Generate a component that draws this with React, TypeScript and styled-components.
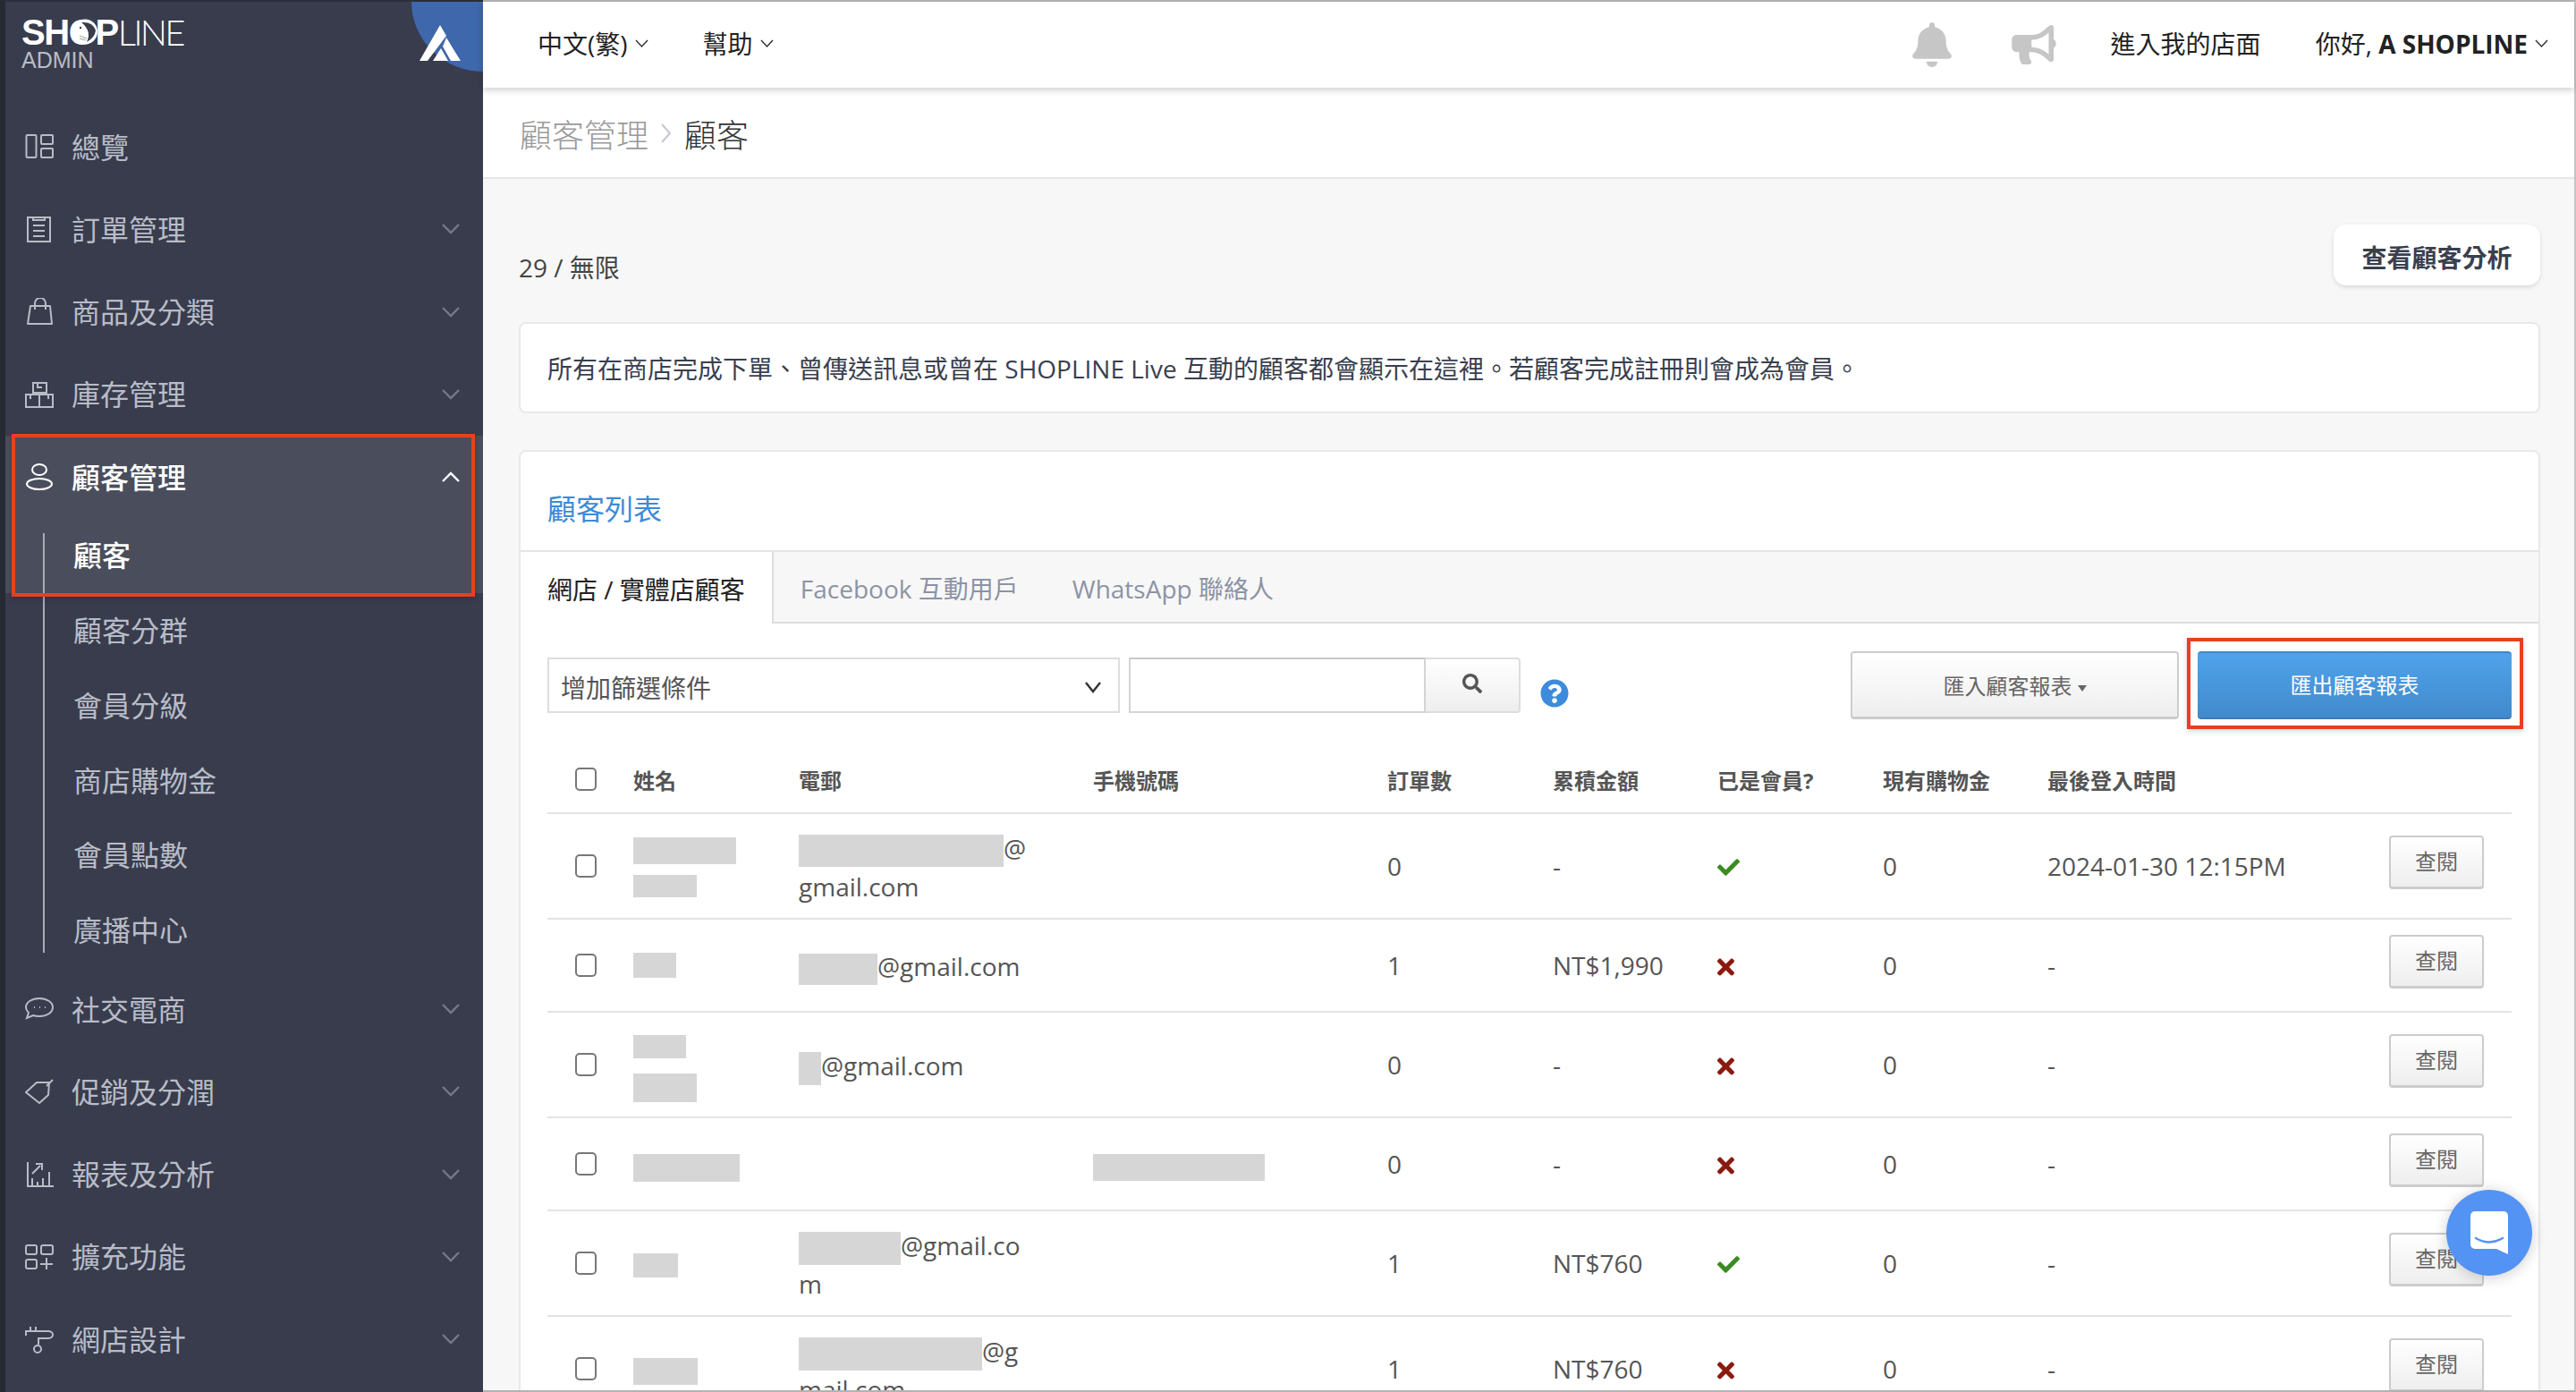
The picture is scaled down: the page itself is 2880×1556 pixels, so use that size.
import React from "react";
import styled, { createGlobalStyle } from "styled-components";
import { FaBell, FaBullhorn, FaCheck, FaTimes, FaQuestionCircle, FaSearch } from "react-icons/fa";

const GlobalStyle = createGlobalStyle`
  html, body {
    margin: 0;
    padding: 0;
    height: 100%;
    overflow: hidden;
  }
  body {
    font-family: "Open Sans", "Noto Sans CJK TC", sans-serif;
    font-size: 28px;
    color: #555;
  }
  * {
    box-sizing: border-box;
  }
`;

const Frame = styled.div`
  position: relative;
  display: flex;
  width: 2880px;
  height: 1556px;
  overflow: hidden;
`;

// red marks drawn on top of the screenshot
const Annotation = styled.div<{ $x: number; $y: number; $w: number; $h: number }>`
  position: absolute;
  left: ${(p) => p.$x}px;
  top: ${(p) => p.$y}px;
  width: ${(p) => p.$w}px;
  height: ${(p) => p.$h}px;
  border: 4px solid #e8401f;
  box-shadow: 0 2px 6px rgba(0, 0, 0, 0.18);
  pointer-events: none;
`;

/* sidebar */
const Sidebar = styled.aside`
  flex: 0 0 540px;
  height: 100%;
  background: #383c4c;
  border-left: 6px solid #262a35;
  border-top: 2px solid #2a2e3c;
  overflow: hidden;
`;

const Brand = styled.div`
  position: relative;
  height: 116px;
  padding: 19px 0 0 18px;
`;

const BrandName = styled.div`
  position: relative;
  display: flex;
  width: 190px;
  height: 30px;
  align-items: center;
  font-family: "Liberation Sans", sans-serif;
  font-size: 40px;
  line-height: 30px;
  color: #fff;
`;

const BrandBold = styled.span`
  font-weight: 700;
  letter-spacing: -1.4px;
`;

const BrandLight = styled.span`
  font-family: "Lato", sans-serif;
  font-weight: 300;
  letter-spacing: -2.8px;
`;

const BrandFish = styled.svg`
  position: absolute;
  left: 56px;
  top: 0;
  width: 30px;
  height: 29px;
`;

const BrandSub = styled.div`
  margin-top: 6px;
  font-family: "Liberation Sans", sans-serif;
  font-size: 25px;
  line-height: 20px;
  color: #b9bcc6;
`;

const CornerBadge = styled.div`
  position: absolute;
  right: 0;
  top: 0;
  width: 80px;
  height: 78px;
  background: #3f67ab;
  border-bottom-left-radius: 80px 78px;
`;

const CornerLogo = styled.svg`
  position: absolute;
  left: 9px;
  top: 26px;
  width: 46px;
  height: 40px;
`;

const NavRow = styled.div<{ $active?: boolean }>`
  display: flex;
  align-items: center;
  height: 92.25px;
  padding: 0 26px 0 22px;
  font-size: 32px;
  color: ${(p) => (p.$active ? "#fff" : "#b8bcc8")};
  background: ${(p) => (p.$active ? "#4a4e5c" : "transparent")};
  font-weight: ${(p) => (p.$active ? 500 : 400)};
`;

const NavIcon = styled.svg`
  flex: 0 0 32px;
  width: 32px;
  height: 32px;
  margin-right: 20px;
  fill: none;
  stroke: currentColor;
  stroke-width: 2;
`;

const NavLabel = styled.span`
  flex: 1;
  padding-bottom: 3px;
`;

const NavChevron = styled.svg<{ $active?: boolean }>`
  width: 20px;
  height: 12px;
  fill: none;
  stroke: ${(p) => (p.$active ? "#fff" : "#747888")};
  stroke-width: 2.4;
`;

const SubList = styled.div`
  position: relative;
  &::before {
    content: "";
    position: absolute;
    left: 42px;
    top: 17px;
    bottom: 17px;
    width: 2px;
    background: #a8abb5;
  }
`;

const SubRow = styled.div<{ $active?: boolean }>`
  height: 83.8px;
  line-height: 83.8px;
  padding-left: 76px;
  font-size: 32px;
  color: ${(p) => (p.$active ? "#fff" : "#b8bcc8")};
  background: ${(p) => (p.$active ? "#4a4e5c" : "transparent")};
  font-weight: ${(p) => (p.$active ? 500 : 400)};
`;

/* header */
const Main = styled.main`
  flex: 1;
  min-width: 0;
  display: flex;
  flex-direction: column;
  height: 100%;
  border-top: 2px solid #b3b3b3;
  border-right: 2px solid #c4c4c4;
  border-bottom: 2px solid #b3b3b3;
  background: #f7f7f7;
`;

const TopBar = styled.header`
  position: relative;
  z-index: 2;
  flex: 0 0 96px;
  display: flex;
  align-items: center;
  padding: 0 28px 3px 61px;
  background: #fff;
  box-shadow: 0 3px 7px rgba(0, 0, 0, 0.18);
  color: #222;
`;

const TopLink = styled.span<{ $gap?: number }>`
  display: inline-flex;
  align-items: center;
  margin-right: ${(p) => p.$gap ?? 0}px;
  line-height: 40px;
  white-space: nowrap;
`;

const Caret = styled.svg`
  width: 17px;
  height: 10px;
  margin-left: 7px;
  fill: none;
  stroke: #333;
  stroke-width: 1.5;
`;

const TopSpacer = styled.div`
  flex: 1;
`;

const BellIcon = styled(FaBell)`
  width: 46px;
  height: 50px;
  margin: 3px 65px 0 0;
  color: #c6c6c6;
`;

const HornIcon = styled(FaBullhorn)`
  width: 52px;
  height: 44px;
  margin: 3px 60px 0 0;
  color: #c6c6c6;
`;

const Crumbs = styled.div`
  flex: 0 0 102px;
  display: flex;
  align-items: center;
  padding: 2px 0 0 41px;
  background: #fff;
  border-bottom: 2px solid #e5e5e5;
  font-size: 36px;
  font-weight: 300;
`;

const CrumbParent = styled.span`
  color: #999;
`;

const CrumbCurrent = styled.span`
  color: #333;
`;

const CrumbArrow = styled.svg`
  width: 14px;
  height: 28px;
  margin: 0 13px 0 13px;
  fill: none;
  stroke: #c3c7d3;
  stroke-width: 2;
`;

/* content */
const Content = styled.div`
  flex: 1;
  min-height: 0;
  overflow: hidden;
  padding: 51px 38px 0 40px;
`;

const SummaryRow = styled.div`
  display: flex;
  justify-content: space-between;
  align-items: flex-end;
`;

const Count = styled.div`
  line-height: 40px;
  color: #444;
`;

const AnalysisButton = styled.button`
  width: 231px;
  height: 68px;
  padding: 3px 0 0;
  border: 0;
  border-radius: 14px;
  background: #fff;
  box-shadow: 0 2px 5px rgba(0, 0, 0, 0.12);
  font: inherit;
  font-weight: 600;
  color: #3a3f4f;
`;

const InfoCard = styled.div`
  display: flex;
  align-items: center;
  height: 102px;
  margin-top: 41px;
  padding-left: 30px;
  background: #fff;
  border: 2px solid #e8e8e8;
  border-radius: 8px;
  color: #3a3f4f;
`;

const Panel = styled.section`
  margin-top: 41px;
  background: #fff;
  border: 2px solid #e8e8e8;
  border-radius: 8px 8px 0 0;
`;

const PanelTitle = styled.h2`
  margin: 0;
  height: 110px;
  padding: 42px 0 0 30px;
  font-size: 32px;
  font-weight: 400;
  line-height: 44px;
  color: #3b8bd9;
`;

const TabBar = styled.div`
  display: flex;
  height: 82px;
  background: #f7f7f7;
  border-top: 2px solid #e5e5e5;
  border-bottom: 2px solid #ddd;
`;

const Tab = styled.div<{ $active?: boolean }>`
  display: flex;
  align-items: center;
  height: ${(p) => (p.$active ? "80px" : "auto")};
  padding: 2px 30px 0;
  background: ${(p) => (p.$active ? "#fff" : "transparent")};
  border-right: ${(p) => (p.$active ? "2px solid #ddd" : "0")};
  color: ${(p) => (p.$active ? "#222" : "#8d93a5")};
`;

const Toolbar = styled.div`
  display: flex;
  align-items: flex-start;
  margin: 31px 30px 0;
  height: 76px;
`;

const SelectBox = styled.div`
  display: flex;
  align-items: center;
  justify-content: space-between;
  width: 640px;
  height: 62px;
  margin-top: 7px;
  padding: 4px 18px 0 13px;
  border: 2px solid #ddd;
  color: #555;
`;

const SelectCaret = styled.svg`
  width: 20px;
  height: 14px;
  fill: none;
  stroke: #333;
  stroke-width: 2.4;
`;

const SearchGroup = styled.div`
  display: flex;
  width: 438px;
  height: 62px;
  margin: 7px 0 0 10px;
`;

const SearchInput = styled.input`
  flex: 1;
  min-width: 0;
  border: 2px solid #d4d4d4;
  border-top-color: #c8c8c8;
  background: #fff;
`;

const SearchButton = styled.button`
  flex: 0 0 106px;
  display: flex;
  align-items: center;
  justify-content: center;
  padding: 0 0 4px;
  border: 2px solid #ddd;
  border-left: 0;
  border-radius: 0 4px 4px 0;
  background: linear-gradient(#fff, #eee);
  color: #555;
`;

const SearchGlyph = styled(FaSearch)`
  width: 22px;
  height: 24px;
`;

const HelpIcon = styled(FaQuestionCircle)`
  width: 32px;
  height: 32px;
  margin: 31px 0 0 22px;
  color: #3d8bdc;
`;

const ToolSpacer = styled.div`
  flex: 1;
`;

const ImportButton = styled.button`
  width: 367px;
  height: 76px;
  margin-right: 21px;
  border: 2px solid #ccc;
  border-bottom-width: 3px;
  border-radius: 4px;
  background: linear-gradient(#fff, #eee);
  font: inherit;
  font-size: 24px;
  color: #666;
`;

const CaretDown = styled.span`
  display: inline-block;
  margin-left: 6px;
  vertical-align: middle;
  border-left: 5px solid transparent;
  border-right: 5px solid transparent;
  border-top: 7px solid #666;
`;

const ExportButton = styled.button`
  width: 351px;
  height: 76px;
  padding: 0 0 3px;
  border: 0;
  border-top: 2px solid #3f87c9;
  border-bottom: 2px solid #3b7db9;
  border-radius: 4px;
  background: linear-gradient(#4fa3ec, #418acb);
  font: inherit;
  font-size: 24px;
  color: #fff;
`;

/* table */
const Table = styled.div`
  margin: 32px 30px 0;
`;

const Row = styled.div<{ $height: number }>`
  display: grid;
  grid-template-columns: 96px 185px 329px 329px 185px 184px 185px 184px 330px 1fr;
  align-items: center;
  height: ${(p) => p.$height}px;
  border-bottom: 2px solid #e3e3e3;
`;

const HeadRow = styled(Row)`
  padding-bottom: 2px;
`;

const HeadCell = styled.div`
  font-size: 24px;
  font-weight: 700;
  color: #555;
`;

const CheckCell = styled.div`
  display: flex;
  padding-left: 31px;
`;

const Check = styled.input`
  appearance: none;
  width: 24px;
  height: 26px;
  margin: 0;
  border: 2px solid #777;
  border-radius: 5px;
  background: #fff;
`;

const NameStack = styled.div<{ $gap: number; $shift: number }>`
  display: flex;
  flex-direction: column;
  align-items: flex-start;
  gap: ${(p) => p.$gap}px;
  padding-top: ${(p) => p.$shift}px;
`;

const Redacted = styled.span<{ $w: number; $h: number }>`
  display: inline-block;
  width: ${(p) => p.$w}px;
  height: ${(p) => p.$h}px;
  background: #d6d6d6;
  vertical-align: middle;
`;

const EmailCell = styled.div`
  width: 262px;
  padding-top: 3px;
  line-height: 43px;
  word-break: break-all;
`;

const TextCell = styled.div`
  line-height: 40px;
  white-space: nowrap;
`;

const MemberCell = styled.div<{ $member: boolean }>`
  padding-top: ${(p) => (p.$member ? 2 : 4)}px;
`;

const YesIcon = styled(FaCheck)`
  display: block;
  width: 25px;
  height: 25px;
  color: #3c8a21;
`;

const NoIcon = styled(FaTimes)`
  display: block;
  width: 19px;
  height: 28px;
  color: #8a1a0f;
`;

const ActionCell = styled.div`
  display: flex;
  justify-content: flex-end;
  padding-right: 31px;
`;

const ViewButton = styled.button`
  width: 106px;
  height: 60px;
  margin-bottom: 8px;
  padding: 0 0 5px;
  border: 2px solid #ccc;
  border-bottom-width: 3px;
  border-radius: 4px;
  background: linear-gradient(#fff, #eee);
  font: inherit;
  font-size: 24px;
  color: #666;
`;

/* chat launcher */
const ChatBubble = styled.div`
  position: absolute;
  left: 2735px;
  top: 1330px;
  display: flex;
  align-items: center;
  justify-content: center;
  width: 96px;
  height: 96px;
  border-radius: 50%;
  background: #5393f3;
  box-shadow: 0 2px 16px rgba(0, 0, 0, 0.2);
`;

const ChatGlyph = styled.svg`
  width: 42px;
  height: 48px;
`;

const navIcons: Record<string, React.ReactNode> = {
  overview: (
    <>
      <rect x="1.5" y="3" width="11" height="25" rx="1" />
      <rect x="18" y="3" width="13" height="10" rx="1" />
      <rect x="18" y="18" width="13" height="10" rx="1" />
    </>
  ),
  orders: (
    <>
      <path d="M3 3h25v27H3z" />
      <path d="M9 3v3h13V3M9 12h13M9 18h13M9 24h13" />
    </>
  ),
  bag: (
    <>
      <path d="M6 9h22l2 20H3z" strokeLinejoin="round" />
      <path d="M11 13V6a6 6 0 0 1 12 0v7" />
    </>
  ),
  stock: (
    <>
      <path d="M9 3h15v11H9zM1 16h15v14H1zM16 16h15v14H16z" />
      <path d="M14 3v5h5M6 16v5M26 16v5" />
    </>
  ),
  person: (
    <>
      <ellipse cx="16" cy="8" rx="8" ry="6" />
      <ellipse cx="16" cy="24" rx="14" ry="6" />
    </>
  ),
  chat: (
    <>
      <path d="M16 4c8 0 15 4 15 10s-7 10-15 10c-3 0-5-.3-7-1l-7 3 2-6c-2-2-3-4-3-6C1 8 8 4 16 4z" />
      <path d="M10 14h1M16 14h1M22 14h1" />
    </>
  ),
  tag: (
    <>
      <path d="M1 17 13 6h14l-1 14-10 9z" strokeLinejoin="round" />
      <path d="M24 10l7-7" />
    </>
  ),
  report: (
    <>
      <path d="M3 2v27h29" />
      <path d="M8 29v-9M14 29v-5M20 29v-9M27 29V13M8 15l9-9M12 4h7v7" />
    </>
  ),
  apps: (
    <>
      <rect x="1" y="3" width="12" height="10" rx="2" />
      <rect x="18" y="3" width="13" height="10" rx="2" />
      <rect x="1" y="19" width="12" height="10" rx="2" />
      <path d="M17 24h14M24 17v13" />
    </>
  ),
  paint: (
    <>
      <path d="M1 12V7h25c3 0 5 2 5 4s-2 4-5 4H15v7" />
      <path d="M6 7V2M12 7V2" />
      <circle cx="14" cy="27" r="4" />
    </>
  ),
};

const Icon = ({ name }: { name: string }) => <NavIcon viewBox="0 0 32 32">{navIcons[name]}</NavIcon>;

const Chevron = ({ up }: { up?: boolean }) => (
  <NavChevron viewBox="0 0 20 12" $active={up}>
    <path d={up ? "M1 11 10 2l9 9" : "M1 1l9 9 9-9"} />
  </NavChevron>
);

const TopCaret = () => (
  <Caret viewBox="0 0 17 10">
    <path d="M2 1l6.5 7L15 1" />
  </Caret>
);

const topMenu = [
  { icon: "overview", label: "總覽" },
  { icon: "orders", label: "訂單管理", more: true },
  { icon: "bag", label: "商品及分類", more: true },
  { icon: "stock", label: "庫存管理", more: true },
];

const bottomMenu = [
  { icon: "chat", label: "社交電商" },
  { icon: "tag", label: "促銷及分潤" },
  { icon: "report", label: "報表及分析" },
  { icon: "apps", label: "擴充功能" },
  { icon: "paint", label: "網店設計" },
];

const subMenu = ["顧客", "顧客分群", "會員分級", "商店購物金", "會員點數", "廣播中心"];

const heads = ["姓名", "電郵", "手機號碼", "訂單數", "累積金額", "已是會員?", "現有購物金", "最後登入時間"];

interface Customer {
  height: number;
  names: [number, number][];
  gap?: number;
  shift?: number;
  mail?: [number, number];
  phone?: [number, number];
  orders: number;
  total: string;
  member: boolean;
  last: string;
}

const customers: Customer[] = [
  { height: 118, names: [[115, 30], [71, 25]], gap: 12, shift: 2, mail: [229, 36], orders: 0, total: "-", member: true, last: "2024-01-30 12:15PM" },
  { height: 104, names: [[48, 28]], mail: [88, 35], orders: 1, total: "NT$1,990", member: false, last: "-" },
  { height: 118, names: [[59, 26], [71, 32]], gap: 17, shift: 8, mail: [25, 37], orders: 0, total: "-", member: false, last: "-" },
  { height: 104, names: [[119, 31]], shift: 8, phone: [192, 30], orders: 0, total: "-", member: false, last: "-" },
  { height: 118, names: [[50, 27]], shift: 4, mail: [114, 37], orders: 1, total: "NT$760", member: true, last: "-" },
  { height: 118, names: [[72, 30]], shift: 6, mail: [205, 37], orders: 1, total: "NT$760", member: false, last: "-" },
];

export default function App() {
  return (
    <Frame>
      <GlobalStyle />
      <Sidebar>
        <Brand>
          <BrandName>
            <BrandBold>SHOP</BrandBold>
            <BrandLight>LINE</BrandLight>
            <BrandFish viewBox="0 0 30 29">
              <circle cx="15" cy="14.5" r="14" fill="#fff" />
              <path d="M11 4 Q24 3 27 13 Q26 21 17 26 Q23 14 11 4z" fill="#383c4c" />
              <circle cx="10" cy="10" r="1.2" fill="#383c4c" />
              <path d="M9 19l8 3M9 22l7 2" fill="none" stroke="#9a9da8" strokeWidth="1" />
            </BrandFish>
          </BrandName>
          <BrandSub>ADMIN</BrandSub>
          <CornerBadge>
            <CornerLogo viewBox="0 0 46 40">
              <path d="M23 0 30 12 9 40H0z" fill="#fff" />
              <path d="M30 14 46 40H35L26 24z M24 26l8 14H15z" fill="#fff" />
            </CornerLogo>
          </CornerBadge>
        </Brand>

        {topMenu.map((item) => (
          <NavRow key={item.label}>
            <Icon name={item.icon} />
            <NavLabel>{item.label}</NavLabel>
            {item.more && <Chevron />}
          </NavRow>
        ))}

        <NavRow $active>
          <Icon name="person" />
          <NavLabel>顧客管理</NavLabel>
          <Chevron up />
        </NavRow>
        <SubList>
          {subMenu.map((label, i) => (
            <SubRow key={label} $active={i === 0}>
              {label}
            </SubRow>
          ))}
        </SubList>

        {bottomMenu.map((item) => (
          <NavRow key={item.label}>
            <Icon name={item.icon} />
            <NavLabel>{item.label}</NavLabel>
            <Chevron />
          </NavRow>
        ))}
      </Sidebar>

      <Main>
        <TopBar>
          <TopLink $gap={60}>
            中文(繁)
            <TopCaret />
          </TopLink>
          <TopLink>
            幫助
            <TopCaret />
          </TopLink>
          <TopSpacer />
          <BellIcon />
          <HornIcon />
          <TopLink $gap={61}>進入我的店面</TopLink>
          <TopLink>
            你好,&nbsp;<b>A SHOPLINE</b>
            <TopCaret />
          </TopLink>
        </TopBar>

        <Crumbs>
          <CrumbParent>顧客管理</CrumbParent>
          <CrumbArrow viewBox="0 0 14 28">
            <path d="M2 4l9 10-9 10" />
          </CrumbArrow>
          <CrumbCurrent>顧客</CrumbCurrent>
        </Crumbs>

        <Content>
          <SummaryRow>
            <Count>29 / 無限</Count>
            <AnalysisButton>查看顧客分析</AnalysisButton>
          </SummaryRow>

          <InfoCard>所有在商店完成下單、曾傳送訊息或曾在 SHOPLINE Live 互動的顧客都會顯示在這裡。若顧客完成註冊則會成為會員。</InfoCard>

          <Panel>
            <PanelTitle>顧客列表</PanelTitle>
            <TabBar>
              <Tab $active>網店 / 實體店顧客</Tab>
              <Tab>Facebook 互動用戶</Tab>
              <Tab>WhatsApp 聯絡人</Tab>
            </TabBar>

            <Toolbar>
              <SelectBox>
                增加篩選條件
                <SelectCaret viewBox="0 0 20 14">
                  <path d="M2 2l8 10 8-10" />
                </SelectCaret>
              </SelectBox>
              <SearchGroup>
                <SearchInput />
                <SearchButton>
                  <SearchGlyph />
                </SearchButton>
              </SearchGroup>
              <HelpIcon />
              <ToolSpacer />
              <ImportButton>
                匯入顧客報表
                <CaretDown />
              </ImportButton>
              <ExportButton>匯出顧客報表</ExportButton>
            </Toolbar>

            <Table>
              <HeadRow $height={74}>
                <CheckCell>
                  <Check type="checkbox" />
                </CheckCell>
                {heads.map((h) => (
                  <HeadCell key={h}>{h}</HeadCell>
                ))}
              </HeadRow>
              {customers.map((c, i) => (
                <Row key={i} $height={c.height}>
                  <CheckCell>
                    <Check type="checkbox" />
                  </CheckCell>
                  <NameStack $gap={c.gap ?? 0} $shift={c.shift ?? 0}>
                    {c.names.map(([w, h], n) => (
                      <Redacted key={n} $w={w} $h={h} />
                    ))}
                  </NameStack>
                  <EmailCell>
                    {c.mail && (
                      <>
                        <Redacted $w={c.mail[0]} $h={c.mail[1]} />
                        @gmail.com
                      </>
                    )}
                  </EmailCell>
                  <div>{c.phone && <Redacted $w={c.phone[0]} $h={c.phone[1]} />}</div>
                  <TextCell>{c.orders}</TextCell>
                  <TextCell>{c.total}</TextCell>
                  <MemberCell $member={c.member}>{c.member ? <YesIcon /> : <NoIcon />}</MemberCell>
                  <TextCell>0</TextCell>
                  <TextCell>{c.last}</TextCell>
                  <ActionCell>
                    <ViewButton>查閱</ViewButton>
                  </ActionCell>
                </Row>
              ))}
            </Table>
          </Panel>
        </Content>
      </Main>

      <ChatBubble>
        <ChatGlyph viewBox="0 0 42 48">
          <path d="M5 0h32a5 5 0 0 1 5 5v43l-13-6H5a5 5 0 0 1-5-5V5a5 5 0 0 1 5-5z" fill="#fff" />
          <path d="M6 30q15 9 30 0" fill="none" stroke="#5393f3" strokeWidth="2.6" strokeLinecap="round" />
        </ChatGlyph>
      </ChatBubble>

      <Annotation $x={13} $y={485} $w={518} $h={182} />
      <Annotation $x={2445} $y={713} $w={376} $h={102} />
    </Frame>
  );
}
